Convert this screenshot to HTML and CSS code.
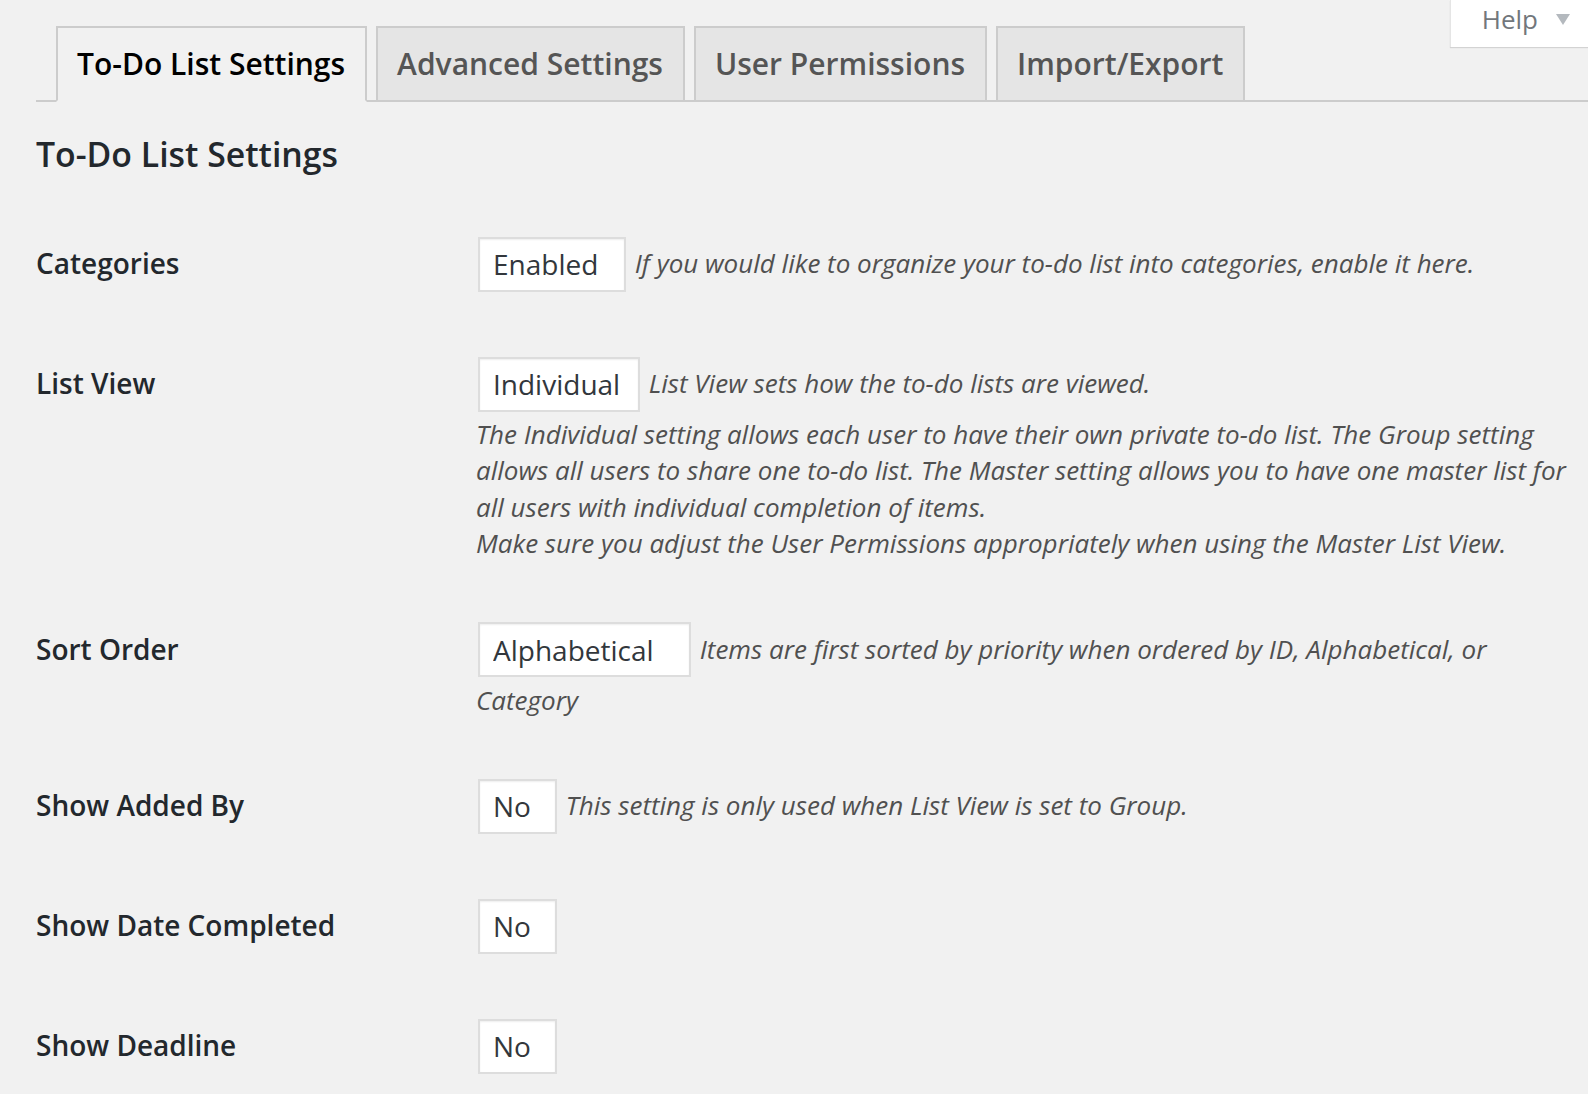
FILE: index.html
```html
<!DOCTYPE html>
<html lang="en">
<head>
<meta charset="utf-8">
<title>To-Do List Settings</title>
<link rel="stylesheet" href="styles.css">
</head>
<body>
<div class="wrap">
  <nav class="nav-tab-wrapper">
    <a class="nav-tab nav-tab-active" href="#">To-Do List Settings</a>
    <a class="nav-tab" href="#">Advanced Settings</a>
    <a class="nav-tab" href="#">User Permissions</a>
    <a class="nav-tab" href="#">Import/Export</a>
    <button class="help-toggle" type="button">Help<svg class="help-arrow" viewBox="0 0 14 11" width="14" height="11" aria-hidden="true"><path d="M0 0H14L7 11Z" fill="#b4b9be"/></svg></button>
  </nav>

  <h2 class="page-title">To-Do List Settings</h2>

  <div class="form-table">
    <div class="field-label">Categories</div>
    <div class="field">
      <select class="sel sel-enabled"><option>Enabled</option></select>
      <span class="description">If you would like to organize your to-do list into categories, enable it here.</span>
    </div>

    <div class="field-label">List View</div>
    <div class="field">
      <select class="sel sel-individual"><option>Individual</option></select>
      <span class="description">List View sets how the to-do lists are viewed.<br>The Individual setting allows each user to have their own private to-do list. The Group setting<br>allows all users to share one to-do list. The Master setting allows you to have one master list for<br>all users with individual completion of items.<br>Make sure you adjust the User Permissions appropriately when using the Master List View.</span>
    </div>

    <div class="field-label">Sort Order</div>
    <div class="field">
      <select class="sel sel-alpha"><option>Alphabetical</option></select>
      <span class="description">Items are first sorted by priority when ordered by ID, Alphabetical, or<br>Category</span>
    </div>

    <div class="field-label">Show Added By</div>
    <div class="field">
      <select class="sel sel-no"><option>No</option></select>
      <span class="description">This setting is only used when List View is set to Group.</span>
    </div>

    <div class="field-label">Show Date Completed</div>
    <div class="field">
      <select class="sel sel-no"><option>No</option></select>
    </div>

    <div class="field-label">Show Deadline</div>
    <div class="field">
      <select class="sel sel-no"><option>No</option></select>
    </div>
  </div>
</div>
</body>
</html>
```

FILE: styles.css
```css
html, body {
  margin: 0;
  padding: 0;
  background: #f1f1f1;
}

body {
  font-family: "Open Sans", "Noto Sans", sans-serif;
  color: #23282d;
  overflow: hidden;
}

.wrap {
  padding-left: 36px;
}

/* Tabs */
.nav-tab-wrapper {
  display: flex;
  align-items: flex-start;
  gap: 9px;
  padding: 26px 0 0 20px;
  border-bottom: 2px solid #ccc;
}

.nav-tab {
  display: block;
  border: 2px solid #ccc;
  background: #e5e5e5;
  color: #555;
  font-size: 30px;
  font-weight: 600;
  line-height: 72px;
  padding: 0 20px 0 19px;
  margin-bottom: -2px;
  text-decoration: none;
  white-space: nowrap;
}

.nav-tab-active {
  background: #f1f1f1;
  color: #000;
  border-bottom-color: #f1f1f1;
}

/* Help toggle (screen meta link) */
.help-toggle {
  margin: -26px 0 0 auto;
  display: flex;
  align-items: center;
  gap: 18px;
  height: 47px;
  box-sizing: border-box;
  padding: 0 18px 10px 31px;
  background: #fff;
  border: none;
  border-left: 1px solid #e5e5e5;
  box-shadow: 0 1px 1px rgba(0, 0, 0, 0.12);
  font-family: "Open Sans", "Noto Sans", sans-serif;
  font-size: 26px;
  color: #72777c;
  cursor: pointer;
}

.help-arrow {
  display: block;
  margin-top: 2px;
}

/* Heading */
.page-title {
  font-size: 33.8px;
  font-weight: 600;
  line-height: 44px;
  margin: 30px 0 28px;
  color: #23282d;
}

/* Form table */
.form-table {
  display: grid;
  grid-template-columns: 420px 1fr;
}

.field-label {
  padding: 41px 20px 0 0;
  font-size: 28px;
  font-weight: 600;
  line-height: 36px;
  color: #23282d;
}

.field {
  padding: 30px 20px;
  font-size: 26px;
  line-height: 36.4px;
}

.sel {
  -webkit-appearance: none;
  appearance: none;
  height: 55px;
  margin: 2.5px 2px;
  padding: 0 0 0 13px;
  border: 2px solid #ddd;
  border-radius: 0;
  background: #fff;
  box-shadow: inset 0 1px 2px rgba(0, 0, 0, 0.07);
  font-family: "Open Sans", "Noto Sans", sans-serif;
  font-size: 28px;
  color: #32373c;
  vertical-align: middle;
  box-sizing: border-box;
}

.sel-enabled { width: 148px; }
.sel-individual { width: 162px; }
.sel-alpha { width: 213px; }
.sel-no { width: 79px; }

.description {
  font-style: italic;
  color: #505050;
  position: relative;
  top: 2px;
}
```
